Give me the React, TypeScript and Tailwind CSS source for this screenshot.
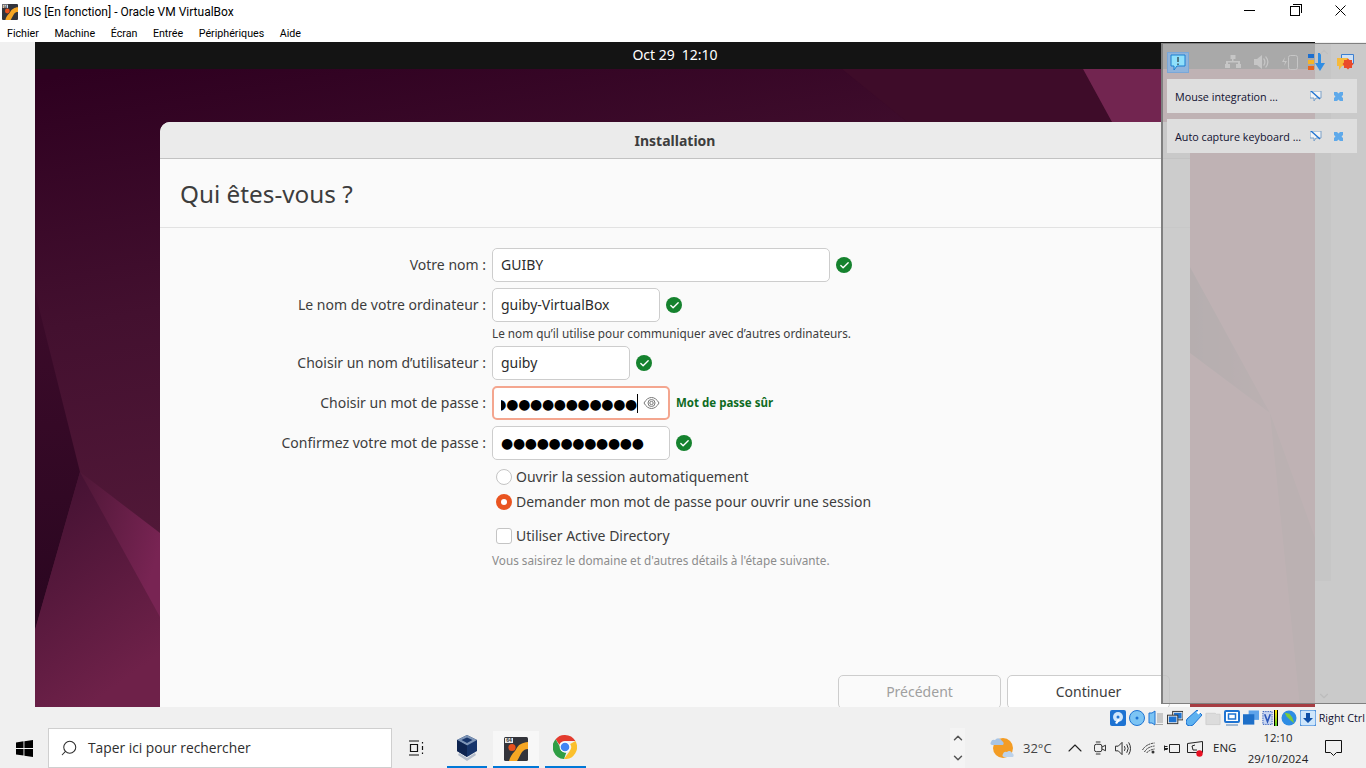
import { Check, Search, ChevronUp, ChevronDown } from 'lucide-react'

function OkIcon() {
  return (
    <span className="flex h-4 w-4 shrink-0 items-center justify-center rounded-full bg-[#15822e]">
      <Check size={11} strokeWidth={3} className="text-white" />
    </span>
  )
}

function AppIcon({ size = 24 }: { size?: number }) {
  return (
    <svg width={size} height={size} viewBox="0 0 24 24">
      <rect width="24" height="24" rx="1.5" fill="#33343b" />
      <path d="M5 24c1-4 3-7 6-10 2-3 3-6 6-7 2-1 4-2 7-2v7c-3 0-4 1-6 3-2 3-3 6-5 9z" fill="#f6a623" />
      <circle cx="8" cy="10.500" r="3.600" fill="#e8501c" />
      <rect x="1" y="1" width="8" height="5" fill="#e9e9e9" />
      <text x="5" y="5.300" textAnchor="middle" fontSize="5" fontWeight="700" fontFamily="Liberation Sans, sans-serif" fill="#333">64</text>
    </svg>
  )
}

function CubeIcon() {
  return (
    <svg width="22" height="27" viewBox="0 0 22 27">
      <path d="M11 1 21 6v11l-10 6L1 17V6z" fill="#17356b" />
      <path d="M11 1 21 6l-10 5.500L1 6z" fill="#7d94b6" />
      <path d="M11 3.500 16.500 6 11 9 5.500 6z" fill="#17356b" />
      <path d="M11 11.500V23L1 17V6z" fill="#0e2450" />
      <path d="M3 19l8 5 8-5 1 2-9 6-9-6z" fill="#b4bdcb" />
    </svg>
  )
}

function ChromeIcon() {
  return (
    <svg width="24" height="24" viewBox="0 0 24 24">
      <path d="M12 0a12 12 0 0 1 10.400 6H12a6 6 0 0 0-5.600 3.700L2.600 4.200A12 12 0 0 1 12 0z" fill="#e33b2e" />
      <path d="M22.400 6A12 12 0 0 1 11 24l5.400-7.600A6 6 0 0 0 17.200 9z" fill="#fbc02d" />
      <path d="M2.600 4.200l4.800 8.300a5.500 5.500 0 0 0 5.800 5.300L11 24A12 12 0 0 1 2.600 4.200z" fill="#2f9e44" />
      <circle cx="12" cy="12" r="5.400" fill="#fff" />
      <circle cx="12" cy="12" r="4.300" fill="#4285f4" />
    </svg>
  )
}

function WinLogo() {
  return (
    <svg width="17" height="17" viewBox="0 0 17 17" fill="#000">
      <path d="M0 2.400 7.500 1.300v6.600H0zM8.400 1.200 17 0v7.900H8.400zM0 8.900h7.500v6.700L0 14.600zM8.400 8.900H17V17l-8.600-1.200z" />
    </svg>
  )
}

function Wallpaper() {
  return (
    <svg className="absolute inset-0" width="1280" height="638" viewBox="0 0 1280 638" preserveAspectRatio="none">
      <defs>
        <linearGradient id="base" x1="0.05" y1="0" x2="0.4" y2="1">
          <stop offset="0" stopColor="#2e0020" />
          <stop offset="0.35" stopColor="#43102f" />
          <stop offset="0.75" stopColor="#551a3a" />
        </linearGradient>
        <linearGradient id="low" x1="0" y1="0" x2="0.4" y2="1">
          <stop offset="0" stopColor="#401030" />
          <stop offset="1" stopColor="#6e2149" />
        </linearGradient>
        <linearGradient id="dark" x1="0" y1="0" x2="0" y2="1">
          <stop offset="0" stopColor="#3c0b2a" />
          <stop offset="1" stopColor="#2a0620" />
        </linearGradient>
        <linearGradient id="bright" x1="0" y1="0" x2="1" y2="0.5">
          <stop offset="0" stopColor="#4f1737" />
          <stop offset="1" stopColor="#782453" />
        </linearGradient>
        <linearGradient id="wedge" x1="0" y1="0" x2="1" y2="0">
          <stop offset="0" stopColor="#6a3a40" />
          <stop offset="1" stopColor="#8c4650" />
        </linearGradient>
      </defs>
      <rect width="1280" height="638" fill="url(#base)" />
      <path d="M0 223 45 403 0 561z" fill="url(#dark)" />
      <path d="M45 403 0 561V638H130V550z" fill="url(#low)" />
      <path d="M45 403 125 464V548z" fill="url(#bright)" />
      <path d="M807 0H1048L1077 53H872z" fill="#3e0c29" />
      <path d="M1048 0H1126V53H1077z" fill="#722550" />
      <path d="M1126 0H1280V638H1126z" fill="#a85560" />
      <path d="M1155 198 1235 344 1155 284z" fill="url(#wedge)" />
      <path d="M1235 344 1280 469V638H1265z" fill="#8c4a50" />
      <path d="M1126 632H1280V638H1126z" fill="#a63c42" />
    </svg>
  )
}

function Row({ label, width, children }: { label: string; width: string; children: React.ReactNode }) {
  return (
    <div className="flex items-center gap-[6px]">
      <span className="w-[326px] shrink-0 pb-[2px] text-right text-[#3d3d3d]">{label}</span>
      <div className={`flex h-[34px] items-center overflow-hidden rounded-[5px] border border-[#cdcdcd] bg-white px-2 pb-[2px] text-[#2c2c2c] ${width}`}>
        {children}
      </div>
    </div>
  )
}

function Dots({ count }: { count: number }) {
  return (
    <span className="whitespace-nowrap pt-[2px] font-['DejaVu_Sans',sans-serif] text-[14px] leading-none tracking-[-0.33px] text-black">
      {'●'.repeat(count)}
    </span>
  )
}

function Dialog() {
  return (
    <div className="relative ml-[125px] mt-[53px] flex h-[600px] w-[1030px] flex-col overflow-hidden rounded-t-[10px] bg-[#fafafa] font-['Noto_Sans',sans-serif] text-[14px]">
      <div className="flex h-[37px] shrink-0 items-center justify-center border-b border-[#c2c2c2] bg-[#ebebeb] text-[14px] font-bold text-[#3d3d3d]">
        Installation
      </div>
      <div className="flex h-[69px] shrink-0 items-center border-b border-[#e2e2e2] pl-5 pt-[2px] text-[24.3px] text-[#3d3d3d]">
        Qui êtes-vous ?
      </div>
      <div className="flex flex-col gap-[6px] pt-5">
        <div className="flex items-center gap-[6px]">
          <Row label="Votre nom :" width="w-[338px]">GUIBY</Row>
          <OkIcon />
        </div>
        <div className="flex items-center gap-[6px]">
          <Row label="Le nom de votre ordinateur :" width="w-[168px]">guiby-VirtualBox</Row>
          <OkIcon />
        </div>
        <div className="-mt-[2px] pl-[332px] text-[11.75px] leading-[14px] text-[#3d3d3d]">
          Le nom qu’il utilise pour communiquer avec d’autres ordinateurs.
        </div>
        <div className="flex items-center gap-[6px]">
          <Row label="Choisir un nom d’utilisateur :" width="w-[138px]">guiby</Row>
          <OkIcon />
        </div>
        <div className="flex items-center gap-[6px]">
          <span className="w-[326px] shrink-0 pb-[2px] text-right text-[#3d3d3d]">Choisir un mot de passe :</span>
          <div className="flex h-[34px] w-[178px] items-center rounded-[5px] border-2 border-[#f4a68f] bg-white pl-[7px] pr-[8px]">
            <div className="flex h-[19px] w-[139px] items-center justify-end overflow-hidden border-r border-black">
              <Dots count={13} />
            </div>
            <svg className="ml-[5px] shrink-0" width="17" height="14" viewBox="0 0 17 14" fill="none" stroke="#777" strokeWidth="1">
              <path d="M1 7c2-3.500 4.500-5.500 7.500-5.500S14 3.500 16 7c-2 3.500-4.500 5.500-7.500 5.500S3 10.500 1 7z" />
              <circle cx="8.500" cy="7" r="3.500" />
              <circle cx="8.500" cy="7" r="1.700" />
            </svg>
          </div>
          <span className="text-[11.5px] font-bold text-[#0e6b1f]">Mot de passe sûr</span>
        </div>
        <div className="flex items-center gap-[6px]">
          <Row label="Confirmez votre mot de passe :" width="w-[178px]">
            <Dots count={12} />
          </Row>
          <OkIcon />
        </div>
      </div>
      <div className="ml-[336px] mt-[7px] flex flex-col text-[#3d3d3d]">
        <div className="flex h-[20px] items-center gap-1">
          <span className="h-4 w-4 rounded-full border border-[#c4c4c4] bg-white" />
          <span className="-mt-[2px]">Ouvrir la session automatiquement</span>
        </div>
        <div className="mt-[5px] flex h-[20px] items-center gap-1">
          <span className="flex h-4 w-4 items-center justify-center rounded-full bg-[#e95420]">
            <span className="h-[6px] w-[6px] rounded-full bg-white" />
          </span>
          <span className="-mt-[2px]">Demander mon mot de passe pour ouvrir une session</span>
        </div>
        <div className="mt-[14px] flex h-[20px] items-center gap-1">
          <span className="h-4 w-4 rounded-[3px] border border-[#c4c4c4] bg-white" />
          <span className="-mt-[2px]">Utiliser Active Directory</span>
        </div>
      </div>
      <div className="ml-[332px] mt-[5px] text-[11.75px] leading-[18px] text-[#8c8c8c]">
        Vous saisirez le domaine et d'autres détails à l'étape suivante.
      </div>
      <div className="mt-[106px] flex gap-[6px] pl-[678px]">
        <div className="flex h-[34px] w-[163px] items-center justify-center rounded-[5px] border border-[#cdcdcd] pb-[2px] text-[#a0a0a0]">Précédent</div>
        <div className="flex h-[34px] w-[163px] items-center justify-center rounded-[5px] border border-[#cdcdcd] bg-white pb-[2px] text-[#3d3d3d]">Continuer</div>
      </div>
    </div>
  )
}

function NoticeRow({ text }: { text: string }) {
  return (
    <div className="flex h-[34px] w-[190px] items-center bg-[#dedede] pl-[8px] text-[10.75px] text-[#101030]">
      <span className="w-[135px] whitespace-nowrap pt-[2px]">{text}</span>
      <svg width="12" height="10" viewBox="0 0 12 10">
        <path d="M0 0h11v7H6l-2 3V7H0z" fill="#f4f4f4" stroke="#7aa0c8" />
        <path d="M1 0l9 8" stroke="#1e73d2" strokeWidth="1.300" />
      </svg>
      <svg className="ml-[11px]" width="11" height="11" viewBox="0 0 11 11">
        <path d="M1 1h3l1.500 1.500L7 1h3v3L8.500 5.500 10 7v3H7L5.500 8.500 4 10H1V7l1.500-1.500L1 4z" fill="#5ea9ea" />
      </svg>
    </div>
  )
}

function NotificationPanel() {
  return (
    <div className="absolute left-[1161px] right-0 top-[43px] flex h-[661px] flex-col border-y border-l-2 border-[#808080] bg-[#c3c3c3]/85 pl-[4px] pt-[7px] font-['Open_Sans',sans-serif]">
      <div className="absolute bottom-[122px] left-[152px] top-0 w-[16px] bg-[#c6c6c6]" />
      <div className="relative flex h-[22px] items-center">
        <span className="flex h-[21px] w-[22px] items-center justify-center border border-[#7aa7d8] bg-[#8fb4dc]">
          <svg width="16" height="17" viewBox="0 0 16 17">
            <path d="M1 1h14v11H7l-3 4v-4H1z" fill="#8fe0fb" stroke="#1c7fd0" />
            <path d="M8 3v5M8 9.500v1.500" stroke="#111" />
          </svg>
        </span>
        <svg className="ml-[36px]" width="16" height="14" viewBox="0 0 16 14" fill="#c6c6c6">
          <path d="M5.500 0h5v4h-2v2H15v3h1v4h-5V9h2V7.500H3V9h2v4H0V9h1V6h6V4H5.500z" />
        </svg>
        <svg className="ml-[13px]" width="15" height="14" viewBox="0 0 15 14" fill="#c6c6c6">
          <path d="M0 4h3l5-4v14l-5-4H0zM10 3q3 4 0 8l-.800-1q2-3 0-6zM12 1q5 6 0 12l-.800-1q4-5 0-10z" />
        </svg>
        <svg className="ml-[12px]" width="17" height="16" viewBox="0 0 17 16" fill="none" stroke="#c6c6c6">
          <rect x="7.500" y="1.500" width="9" height="14" rx="2" />
          <path d="M4 3 1 8h3l-1 4 3-5H3z" fill="#c6c6c6" stroke="none" />
        </svg>
        <svg className="ml-[10px]" width="17" height="18" viewBox="0 0 17 18">
          <rect x="0" y="1" width="6" height="4" fill="#1c6fd0" />
          <rect x="0" y="7" width="6" height="4" fill="#f4b528" />
          <rect x="0" y="13" width="6" height="4" fill="#e8631c" />
          <path d="M10 0h3v10h4l-5 8-5-8h3z" fill="#2f8de4" />
        </svg>
        <svg className="ml-[12px]" width="17" height="17" viewBox="0 0 17 17">
          <path d="M4.500.500h12v9h-12z" fill="#cfe0f4" stroke="#3c7fd0" />
          <path d="M0 4h11v8H5l-3 4v-4H0z" fill="#f6b93b" />
          <path d="M7 6h2.500l1.500-1.500L12.500 6H15v2.500l1.500 1.500L15 11.500V14h-2.500L11 15.500 9.500 14H7v-2.500L5.500 10 7 8.500z" fill="#ea4a2a" />
        </svg>
      </div>
      <ChevronUp size={14} className="absolute left-[154px] top-[1px] text-[#c0c0c0]" />
      <div className="relative mt-[6px] flex flex-col gap-[6px]">
        <NoticeRow text="Mouse integration ..." />
        <NoticeRow text="Auto capture keyboard ..." />
      </div>
      <ChevronDown size={14} className="absolute bottom-[0px] left-[154px] text-[#bcbcbc]" />
    </div>
  )
}

function StatusIcons() {
  return (
    <div className="flex items-center gap-[3px]">
      <svg width="16" height="16" viewBox="0 0 16 16">
        <rect width="16" height="16" rx="2" fill="#1e73d2" />
        <circle cx="8" cy="7" r="5" fill="#cfe6fb" />
        <circle cx="8" cy="7" r="1.500" fill="#1e73d2" />
        <path d="M5 13l3-4 2 1-3 4z" fill="#fff" />
      </svg>
      <svg width="16" height="16" viewBox="0 0 16 16">
        <circle cx="8" cy="8" r="7.500" fill="#7cc4f4" stroke="#1e73d2" />
        <circle cx="8" cy="8" r="1.500" fill="#1e73d2" />
      </svg>
      <svg width="16" height="16" viewBox="0 0 16 16">
        <path d="M1 3h3l3-2v14l-3-2H1z" fill="#7cc4f4" stroke="#1e73d2" />
        <rect x="9" y="3" width="6" height="10" fill="#c8c8c8" />
        <path d="M7 14h8v1H7z" fill="#a8a8a8" />
      </svg>
      <svg width="16" height="16" viewBox="0 0 17 16">
        <rect x="6" y="1" width="11" height="9" fill="#e8e8e8" stroke="#333" />
        <rect x="7.500" y="2.500" width="8" height="6" fill="#1e73d2" />
        <rect x="0.500" y="5" width="11" height="9" fill="#e8e8e8" stroke="#333" />
        <rect x="2" y="6.500" width="8" height="6" fill="#1e73d2" />
      </svg>
      <svg width="16" height="16" viewBox="0 0 16 16">
        <path d="M11 0l5 5-9 10q-3 2-6 0-2-3 0-6z" fill="#5eb2f0" stroke="#1e73d2" />
        <rect x="11" y="1" width="3" height="3" fill="#fff" transform="rotate(45 12.500 2.500)" />
      </svg>
      <svg width="16" height="16" viewBox="0 0 17 16">
        <path d="M1 3h10l1 1h4v11H1z" fill="#dcdcdc" stroke="#cfcfcf" />
      </svg>
      <svg width="16" height="16" viewBox="0 0 16 16">
        <rect x="1" y="1" width="14" height="11" rx="1" fill="#fff" stroke="#1e73d2" strokeWidth="2" />
        <rect x="4.500" y="4" width="7" height="5" fill="none" stroke="#1e73d2" strokeWidth="1.500" />
        <rect x="2" y="14" width="12" height="2" fill="#9fb8d4" />
      </svg>
      <svg width="16" height="16" viewBox="0 0 17 16">
        <rect x="6" y="0" width="11" height="10" fill="#5ea3ea" />
        <rect x="0" y="4" width="12" height="11" fill="#1e6fc8" />
      </svg>
      <div className="flex items-center gap-px">
        <svg width="11" height="16" viewBox="0 0 12 16">
          <rect x="1" y="1" width="10" height="14" fill="#c9d6f2" stroke="#2a56b8" strokeDasharray="1.500 1" />
          <path d="M3 4l3 8 3-8" fill="none" stroke="#2a56b8" strokeWidth="1.800" />
        </svg>
        <span className="h-[16px] w-[4px] border-x border-black bg-gradient-to-b from-[#ffe600] to-[#4ccc20]" />
      </div>
      <svg width="16" height="16" viewBox="0 0 17 17">
        <circle cx="8.500" cy="8.500" r="8" fill="#2f8de4" />
        <path d="M4 3l5 1 3 4 2 6-4-3-4-4z" fill="#7ccb3c" />
      </svg>
      <svg width="16" height="16" viewBox="0 0 16 16">
        <rect width="16" height="16" rx="2" fill="#cfe6fb" stroke="#1e73d2" />
        <path d="M6 3h4v5h3l-5 5-5-5h3z" fill="#0e4fa8" />
      </svg>
    </div>
  )
}

function Taskbar() {
  return (
    <div className="flex h-[40px] items-stretch bg-[#f0f0f0] font-['Open_Sans',sans-serif] text-[#222]">
      <div className="flex w-[48px] items-center justify-center">
        <WinLogo />
      </div>
      <div className="flex w-[344px] items-center border border-[#cfcfcf] bg-white pl-[11px] text-[13.8px] text-[#2e2e2e]">
        <Search size={18} strokeWidth={1.400} className="-scale-x-100" />
        <span className="ml-[10px] pt-px">Taper ici pour rechercher</span>
      </div>
      <div className="flex w-[48px] items-center justify-center">
        <svg width="16" height="16" viewBox="0 0 16 16" fill="none" stroke="#111" strokeWidth="1.200">
          <path d="M1 1h10M1 15h10M2.500 4.500h7v7h-7zM14.500 2v1.500M14.500 6v4M14.500 12.500V14" />
        </svg>
      </div>
      <div className="ml-[7px] flex w-[40px] items-center justify-center border-b-2 border-[#0078d7]">
        <CubeIcon />
      </div>
      <div className="ml-[6px] mt-[3px] flex w-[46px] items-center justify-center border-b-2 border-[#0078d7] bg-[#f7f7f7]">
        <AppIcon />
      </div>
      <div className="ml-[6px] flex w-[41px] items-center justify-center border-b-2 border-[#0078d7] pr-[2px]">
        <ChromeIcon />
      </div>
      <div className="ml-[364px] flex w-[15px] flex-col items-center justify-between bg-[#f4f4f4] py-[3px] text-[#555]">
        <ChevronUp size={14} strokeWidth={2.500} />
        <ChevronDown size={14} strokeWidth={2.500} />
      </div>
      <div className="ml-[25px] flex items-center">
        <svg width="25" height="22" viewBox="0 0 25 22">
          <circle cx="13" cy="11" r="10" fill="#f39c24" />
          <path d="M1 5a3 3 0 0 1 4-2 4 4 0 0 1 7 1 2.500 2.500 0 0 1 1 4H2a2 2 0 0 1-1-3z" fill="#a8c4e4" />
          <path d="M13 17a3 3 0 0 1 4-2 3 3 0 0 1 5 1 2.500 2.500 0 0 1 1 4H14a2 2 0 0 1-1-3z" fill="#bcd2ea" />
        </svg>
        <span className="ml-[8px] w-[30px] pt-px text-[13px] text-[#444]">32°C</span>
      </div>
      <div className="ml-[10px] flex items-center text-[#222]">
        <ChevronUp size={24} strokeWidth={1.100} />
        <svg className="ml-[7px]" width="12" height="16" viewBox="0 0 13 16" fill="none" stroke="#222">
          <rect x="0.500" y="4" width="8" height="8" rx="2" />
          <path d="M8.500 7l4-2v6l-4-2M2 1.500h5M2 14.500h5" />
        </svg>
        <svg className="ml-[9px]" width="16" height="15" viewBox="0 0 17 15" fill="none" stroke="#222">
          <path d="M.500 5h3l4-4v13l-4-4h-3zM10 5q1.500 2.500 0 5M12.500 3q3 4.500 0 9M14.500 1q4 6.500 0 13" />
        </svg>
        <svg className="ml-[11px]" width="13" height="12" viewBox="0 0 13 12" fill="none" stroke="#333">
          <path d="M.500 8Q4 2 12.500 1M2.500 10Q5 5 12.500 4M4.500 11Q7 8 12.500 7" strokeDasharray="2 .700" />
          <circle cx="11" cy="10" r="1.500" fill="#333" stroke="none" />
        </svg>
        <svg className="ml-[8px]" width="17" height="12" viewBox="0 0 17 12" fill="none" stroke="#222">
          <path d="M6.500 2.500h10v8h-10zM5 6.500H1M1.500 3.500v5M1.500 4.500h3M1.500 7.500h3" />
        </svg>
        <svg className="ml-[7px]" width="17" height="17" viewBox="0 0 17 17">
          <path d="M.500 3.500 15.500 1.500v11h-15z" fill="none" stroke="#222" />
          <path d="M5 6l3-1M5 6l1 4h4" fill="none" stroke="#222" />
          <circle cx="12.500" cy="13.500" r="3.200" fill="#e81123" />
        </svg>
      </div>
      <span className="ml-[9px] flex items-center text-[11.5px]">ENG</span>
      <div className="ml-[12px] flex w-[59px] flex-col items-center justify-center text-[11.4px] leading-[21px]">
        <span>12:10</span>
        <span className="whitespace-nowrap">29/10/2024</span>
      </div>
      <div className="ml-[18px] flex items-center">
        <svg width="17" height="16" viewBox="0 0 17 16" fill="none" stroke="#111">
          <path d="M.500.500h16v12h-5l-3 3-3-3h-5z" />
        </svg>
      </div>
    </div>
  )
}

export default function App() {
  return (
    <div className="relative flex h-[768px] w-[1366px] flex-col overflow-hidden bg-[#f0f0f0]">
      <div className="flex h-[42px] shrink-0 flex-col bg-white font-['Roboto',sans-serif] text-[10.7px] text-black">
        <div className="flex h-[23px] items-center pl-[2px]">
          <AppIcon size={16} />
          <span className="ml-[5px] text-[12px]">IUS [En fonction] - Oracle VM VirtualBox</span>
          <div className="-mt-[2px] ml-auto flex items-center pr-[20px]">
            <span className="h-px w-[11px] bg-black" />
            <span className="relative ml-[35px] h-[10px] w-[10px] border border-black">
              <span className="absolute -right-[3px] -top-[3px] h-[9px] w-[9px] border-r border-t border-black" />
            </span>
            <svg className="ml-[35px]" width="11" height="11" viewBox="0 0 11 11" stroke="#000">
              <path d="M.500.500l10 10M10.500.500l-10 10" />
            </svg>
          </div>
        </div>
        <div className="flex h-[19px] items-center gap-[15.5px] pl-[7px] pt-[3px]">
          <span>Fichier</span>
          <span>Machine</span>
          <span>Écran</span>
          <span>Entrée</span>
          <span>Périphériques</span>
          <span>Aide</span>
        </div>
      </div>

      <div className="ml-[35px] h-[665px] w-[1280px] shrink-0 overflow-hidden bg-[#141414]">
        <div className="flex h-[27px] items-center justify-center gap-[7px] pb-[2px] font-['Noto_Sans',sans-serif] text-[14px] text-white">
          <span>Oct 29</span>
          <span>12:10</span>
        </div>
        <div className="relative h-[638px] overflow-hidden">
          <Wallpaper />
          <Dialog />
        </div>
      </div>

      <div className="flex h-[21px] shrink-0 items-center justify-end bg-[#f0f0f0] pr-[1px] font-['Open_Sans',sans-serif] text-[10.8px] text-[#101030]">
        <StatusIcons />
        <span className="ml-[3px] pt-px">Right Ctrl</span>
      </div>

      <Taskbar />
      <NotificationPanel />
    </div>
  )
}
